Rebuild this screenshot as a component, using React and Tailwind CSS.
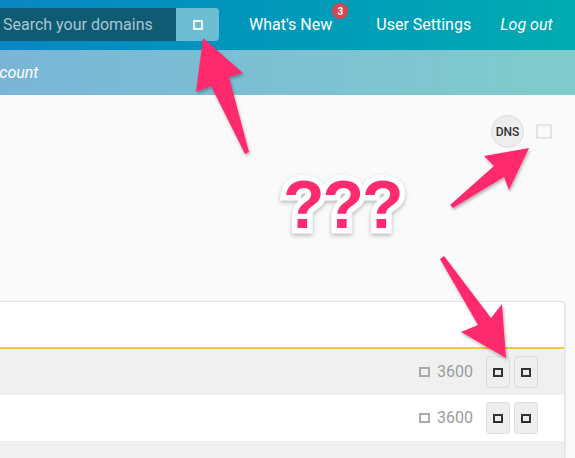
import React from 'react';

const Box = ({ className }) => <span className={`inline-block ${className}`} />;

const RecordRow = ({ striped }) => (
  <div className={`h-[46px] flex items-center justify-end pr-[26px] ${striped ? 'bg-[#f0f0f0]' : 'bg-white'}`}>
    <div className="flex items-center gap-[7px] text-[16px] text-[#9c9c9c] mr-[13px]">
      <Box className="w-[11px] h-[10px] border-2 border-[#aaaaaa]" />
      <span>3600</span>
    </div>
    <div className="flex gap-[4px]">
      {[0, 1].map((i) => (
        <button
          key={i}
          className="w-[24px] h-[32px] rounded-[4px] bg-[#eeeeee] border border-[#dddddd] flex items-center justify-center"
        >
          <Box className="w-[10px] h-[9px] border-2 border-[#333333]" />
        </button>
      ))}
    </div>
  </div>
);

const App = () => {
  return (
    <div className="relative w-[575px] h-[458px] overflow-hidden bg-[#fafafa] font-['Roboto','Liberation_Sans',sans-serif]">
      {/* Top nav */}
      <div className="h-[50px] flex items-center bg-gradient-to-r from-[#0a86c3] to-[#00abb0] text-white text-[16px]">
        <div className="flex items-center h-[33px] -mt-[1px]">
          <div className="w-[176px] h-full bg-[#0f5b73] flex items-center pl-[3px] text-[#a6c6d2]">
            Search your domains
          </div>
          <button className="w-[43px] h-full bg-[#6dbdd3] rounded-r-[4px] flex items-center justify-center">
            <Box className="w-[10px] h-[10px] border-2 border-[#eef8fb]" />
          </button>
        </div>
        <div className="relative ml-[30px]">
          What's New
          <span className="absolute -top-[10px] -right-[16px] w-[16px] h-[16px] rounded-full bg-[#d9464f] text-[10px] font-bold flex items-center justify-center">
            3
          </span>
        </div>
        <div className="ml-[44px]">User Settings</div>
        <div className="ml-[29px] italic">Log out</div>
      </div>

      {/* Sub bar */}
      <div className="h-[45px] flex items-center bg-gradient-to-r from-[#7ab5d7] to-[#80cccd] text-white text-[16px] italic">
        <span className="-ml-[19px]">Account</span>
      </div>

      {/* Zone toolbar */}
      <div className="h-[206px] flex justify-end items-start pt-[20px] pr-[23px]">
        <div className="flex items-center gap-[12px]">
          <div className="w-[33px] h-[33px] rounded-full bg-[#eeeeee] border border-[#dcdcdc] flex items-center justify-center text-[12px] font-medium text-[#333333]">
            DNS
          </div>
          <Box className="w-[16px] h-[15px] border-2 border-[#e3e3e3]" />
        </div>
      </div>

      {/* Records card */}
      <div className="w-[565px] bg-white border-t border-r border-[#e2e2e2] rounded-tr-[4px] shadow-[1px_0_2px_rgba(0,0,0,0.06)]">
        <div className="h-[47px] border-b-2 border-[#f6c945]" />
        <RecordRow striped />
        <RecordRow />
        <div className="h-[20px] bg-[#f0f0f0]" />
      </div>

      {/* Annotation overlay */}
      <svg
        className="absolute inset-0 pointer-events-none"
        width="575"
        height="458"
        viewBox="0 0 575 458"
      >
        <defs>
          <filter id="sh" x="-20%" y="-20%" width="140%" height="140%">
            <feDropShadow dx="1" dy="2" stdDeviation="1.5" floodColor="#000" floodOpacity="0.3" />
          </filter>
        </defs>
        <g fill="#ff2b6e" filter="url(#sh)" strokeLinejoin="round">
          <polygon points="203,38 243,73 229,77 249,152 245,154 211,86 196,92" />
          <polygon points="529,148 509,190 504,177 453,208 450,205 494,166 484,156" />
          <polygon points="506,358 461,332 478,325 440,259 444,256 491,318 502,304" />
        </g>
      </svg>

      <div className="absolute left-[283px] top-[170px] text-[68px] leading-none font-bold tracking-[-2px] text-[#ff2b6e] font-['Liberation_Sans',sans-serif] [-webkit-text-stroke:11px_#ffffff] [paint-order:stroke_fill] drop-shadow-[0_2px_2px_rgba(0,0,0,0.25)]">
        ???
      </div>
    </div>
  );
};

export default App;
